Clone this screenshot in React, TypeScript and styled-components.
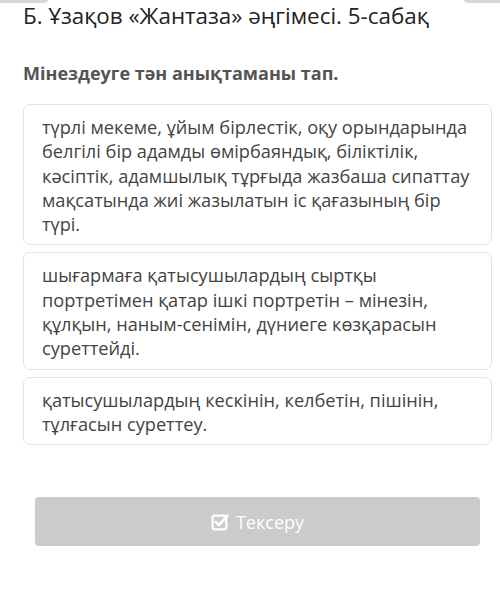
import { Fragment } from "react";
import styled, { createGlobalStyle } from "styled-components";

const Global = createGlobalStyle`
  body {
    margin: 0;
    background: #fff;
    font-family: "Open Sans", "Noto Sans", sans-serif;
  }
`;

const Page = styled.div`
  width: 500px;
  height: 590px;
  overflow: hidden;
  padding: 0 8px 0 23px;
  box-sizing: border-box;
  position: relative;
`;

// grey tabs cut off by the top edge
const Tab = styled.div<{ $side: "left" | "right"; $w: number }>`
  position: absolute;
  top: -6px;
  ${(p) => (p.$side === "left" ? "left: -4px;" : "right: -4px;")}
  width: ${(p) => p.$w}px;
  height: 9px;
  border-radius: 4px;
  background: #d4d6da;
`;

const Title = styled.h1`
  margin: 0;
  padding-top: 1px;
  font-size: 22.4px;
  font-weight: 400;
  line-height: 30px;
  color: #222;
`;

const Question = styled.h2`
  margin: 31px 0 0;
  font-size: 18px;
  font-weight: 700;
  line-height: 22px;
  color: #545454;
`;

const Options = styled.div`
  margin-top: 20px;
  display: flex;
  flex-direction: column;
  gap: 7px;
`;

const Option = styled.div`
  border: 1px solid #e4e4e4;
  border-radius: 7px;
  padding: 10px 8px 8px 18px;
  font-size: 18.2px;
  line-height: 24.3px;
  color: #434343;
  white-space: nowrap;
`;

const Check = styled.button`
  margin: 52px 12px 0;
  width: calc(100% - 24px);
  height: 49px;
  border: none;
  border-radius: 4px;
  background: #cbcbcb;
  color: #fff;
  font-family: inherit;
  font-size: 18px;
  display: flex;
  align-items: center;
  justify-content: center;
  gap: 7px;
`;

// lines kept as they break in the original
const options = [
  [
    "түрлі мекеме, ұйым бірлестік, оқу орындарында",
    "белгілі бір адамды өмірбаяндық, біліктілік,",
    "кәсіптік, адамшылық тұрғыда жазбаша сипаттау",
    "мақсатында жиі жазылатын іс қағазының бір",
    "түрі.",
  ],
  [
    "шығармаға қатысушылардың сыртқы",
    "портретімен қатар ішкі портретін – мінезін,",
    "құлқын, наным-сенімін, дүниеге көзқарасын",
    "суреттейді.",
  ],
  ["қатысушылардың кескінін, келбетін, пішінін,", "тұлғасын суреттеу."],
];

function CheckIcon() {
  return (
    <svg width="18" height="18" viewBox="0 0 17 17" fill="none">
      <rect x="1.5" y="2.5" width="13" height="13" rx="2" stroke="#fff" strokeWidth="2" />
      <path d="M4.5 8.5l3 3L15.5 2.5" stroke="#fff" strokeWidth="2.4" strokeLinecap="round" strokeLinejoin="round" />
    </svg>
  );
}

export default function App() {
  return (
    <Page>
      <Global />
      <Tab $side="left" $w={52} />
      <Tab $side="right" $w={40} />
      <Title>Б. Ұзақов «Жантаза» әңгімесі. 5-сабақ</Title>
      <Question>Мінездеуге тән анықтаманы тап.</Question>
      <Options>
        {options.map((lines, i) => (
          <Option key={i}>
            {lines.map((l, j) => (
              <Fragment key={j}>
                {j > 0 && <br />}
                {l}
              </Fragment>
            ))}
          </Option>
        ))}
      </Options>
      <Check>
        <CheckIcon />
        Тексеру
      </Check>
    </Page>
  );
}
